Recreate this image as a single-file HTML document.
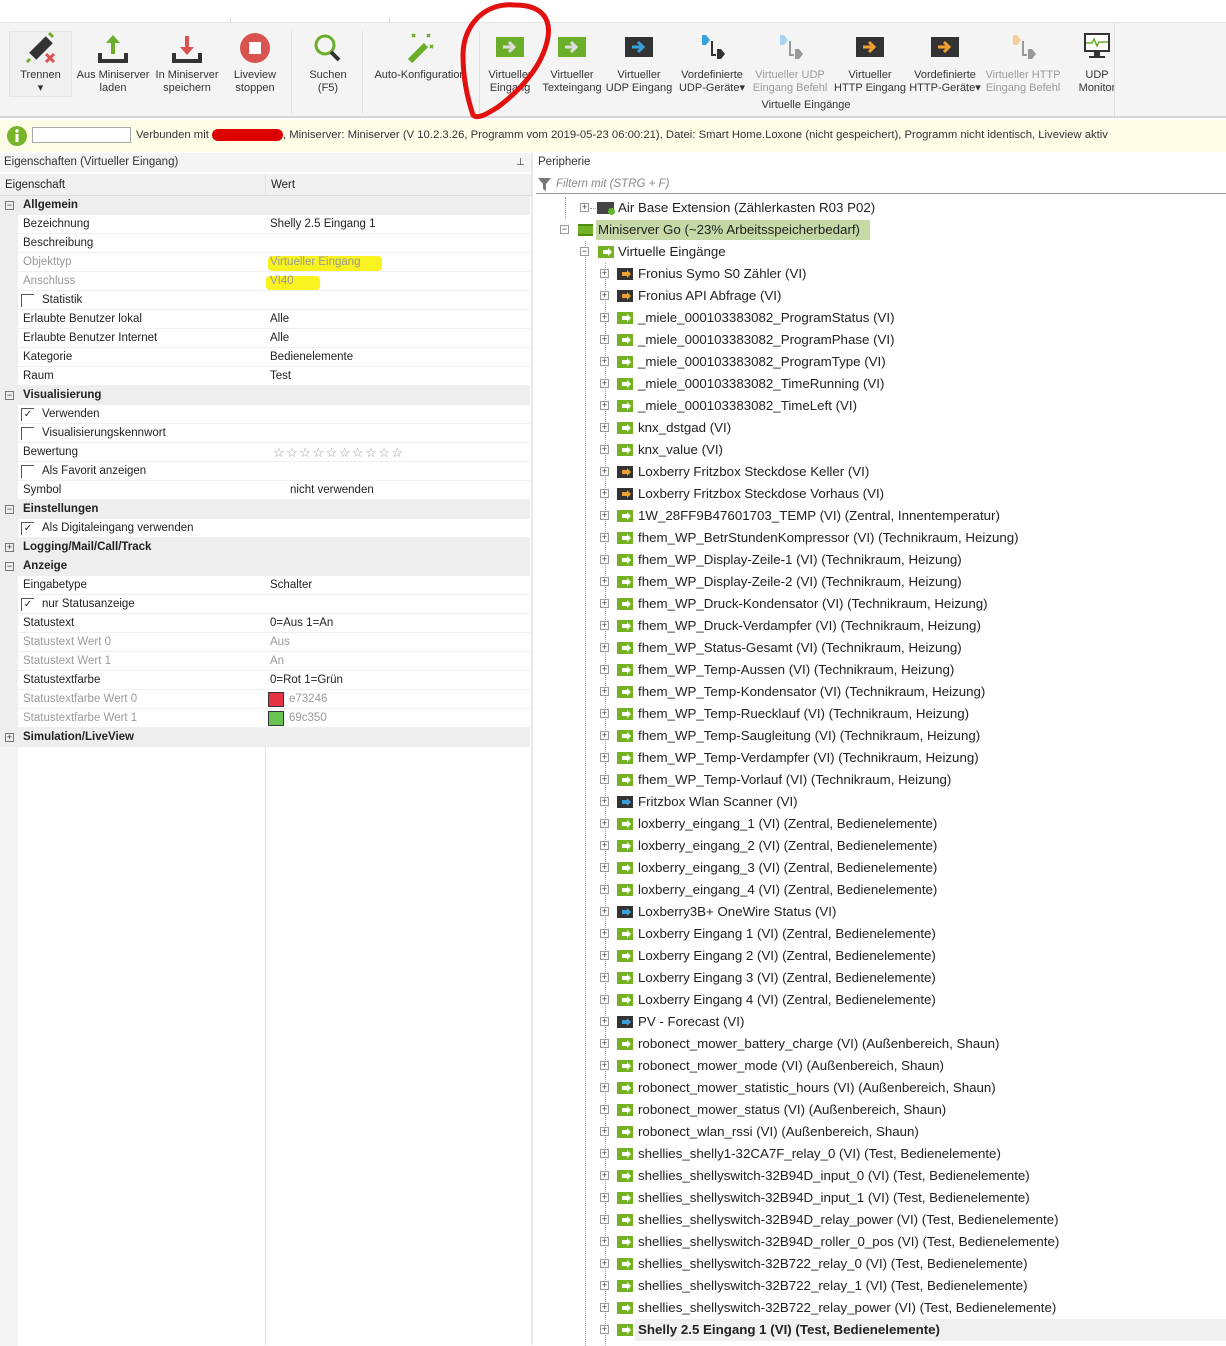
<!DOCTYPE html>
<html><head><meta charset="utf-8"><style>
*{margin:0;padding:0;box-sizing:border-box}
body{width:1226px;height:1345px;overflow:hidden;background:#fff;font-family:"Liberation Sans",sans-serif;color:#222;position:relative}
.abs{position:absolute}
#tb{position:absolute;left:0;top:22px;width:1226px;height:96px;background:#f4f4f4;border-top:1px solid #e2e2e2;border-bottom:2px solid #d6d6d6}
.btn{position:absolute;top:0;text-align:center;font-size:11px;line-height:13px;color:#333;white-space:nowrap}
.btn .ic{height:40px;position:relative}
.dis{color:#9a9a9a}
.sep{position:absolute;top:8px;width:1px;height:82px;background:#ddd}
#info{position:absolute;left:0;top:120px;width:1226px;height:32px;background:#fdfde8;font-size:11.3px;color:#333}
.row{position:absolute;left:0;width:530px;height:19px;font-size:11.5px;line-height:19px}
.cat{background:#eeeeee;font-weight:bold;color:#222}
.it{background:#fff;border-bottom:1px solid #f0f0f0}
.it .k{position:absolute;left:23px}
.it .v{position:absolute;left:270px}
.gut{position:absolute;left:0;top:0;width:18px;height:19px;background:#eeeeee}
.g{color:#9a9a9a}
.ex{position:absolute;left:5px;top:5px;width:9px;height:9px;border:1px solid #777;font-size:9px;line-height:7px;text-align:center;font-weight:normal;color:#333}
.cb{position:absolute;left:21px;top:3px;width:13px;height:13px;border-left:1px solid #555;border-top:1px solid #555;font-size:10px;line-height:12px;text-align:center}
.tr{position:absolute;height:22px;font-size:13.3px;line-height:22px;color:#222;white-space:nowrap}
.pm{position:absolute;top:6px;width:9px;height:9px;border:1px solid #999;background:#fff;font-size:9px;line-height:7px;text-align:center;color:#333}
.ico{position:absolute;top:5px;width:16px;height:12px;background:#74b224}
.ico:after{content:"";position:absolute;left:5px;top:4px;width:6px;height:4px;background:#fff}
.ico:before{content:"";position:absolute;left:10px;top:2px;border-left:4px solid #fff;border-top:4px solid transparent;border-bottom:4px solid transparent}
.o{background:#333}.o:after{background:#f0a030}.o:before{border-left-color:#f0a030}
.b{background:#333}.b:after{background:#3aa0e0}.b:before{border-left-color:#3aa0e0}
.dl{position:absolute;border-left:1px dotted #999}
.hl{position:absolute;border-top:1px dotted #999;width:8px}
.c{position:relative;height:22px;font-size:13.3px;line-height:22px;white-space:nowrap}
.c .pm{left:0}.c .ico{left:17px}.c .t{position:absolute;left:38px}
</style></head><body>

<div class="abs" style="left:0;top:0;width:1226px;height:22px;background:#fff"></div>
<div class="abs" style="left:230px;top:18px;width:160px;height:4px;border-left:1px solid #ddd;border-right:1px solid #ddd"></div>

<div id="tb">
 <div class="abs" style="left:9px;top:8px;width:63px;height:66px;border:1px solid #e4e4e4;background:#f0f0f0"></div>
 <div class="btn" style="left:12px;width:57px;top:6px"><div class="ic"><svg width="40" height="40" viewBox="0 0 40 40" style="margin-top:0"><rect x="10" y="18" width="12" height="10" transform="rotate(-45 16 23)" fill="#333"/><rect x="18" y="10" width="12" height="10" transform="rotate(-45 24 15)" fill="#333"/><path d="M28 4l4 4" stroke="#6aae2a" stroke-width="3"/><path d="M9 30l-3 3" stroke="#6aae2a" stroke-width="3"/><path d="M25 25l8 8M33 25l-8 8" stroke="#d9534f" stroke-width="3"/></svg></div><div>Trennen<br>▾</div></div>
 <div class="btn" style="left:74px;width:78px;top:6px"><div class="ic"><svg width="40" height="40" viewBox="0 0 40 40"><path d="M20 6l-7 8h5v11h4V14h5z" fill="#6aae2a"/><path d="M7 24v8h26v-8" stroke="#333" stroke-width="4" fill="none"/></svg></div>Aus Miniserver<br>laden</div>
 <div class="btn" style="left:152px;width:70px;top:6px"><div class="ic"><svg width="40" height="40" viewBox="0 0 40 40"><path d="M20 26l-7-8h5V7h4v11h5z" fill="#d9534f"/><path d="M7 24v8h26v-8" stroke="#333" stroke-width="4" fill="none"/></svg></div>In Miniserver<br>speichern</div>
 <div class="btn" style="left:225px;width:60px;top:6px"><div class="ic"><svg width="40" height="40" viewBox="0 0 40 40"><circle cx="20" cy="19" r="15" fill="#d9534f"/><rect x="14" y="13" width="12" height="12" fill="#fff"/></svg></div>Liveview<br>stoppen</div>
 <div class="sep" style="left:291px"></div>
 <div class="btn" style="left:300px;width:56px;top:6px"><div class="ic"><svg width="40" height="40" viewBox="0 0 40 40"><circle cx="17" cy="16" r="9" stroke="#6aae2a" stroke-width="3" fill="none"/><path d="M23 23l8 8" stroke="#333" stroke-width="4"/></svg></div>Suchen<br>(F5)</div>
 <div class="sep" style="left:362px"></div>
 <div class="btn" style="left:368px;width:104px;top:6px"><div class="ic"><svg width="40" height="40" viewBox="0 0 40 40"><path d="M10 32l16-16" stroke="#6aae2a" stroke-width="6"/><path d="M12 5l3 3M15 5l-3 3M27 5l3 3M30 5l-3 3M30 16l3 3M33 16l-3 3" stroke="#6aae2a" stroke-width="1.6"/></svg></div>Auto-Konfiguration</div>
 <div class="sep" style="left:479px"></div>
 <div class="btn" style="left:482px;width:56px;top:6px"><div class="ic"><svg width="40" height="40" viewBox="0 0 40 40"><rect x="6" y="8" width="28" height="20" fill="#6aae2a"/><path d="M13 18h9M19 13l5 5-5 5" stroke="#ddd" stroke-width="3" fill="none"/></svg></div>Virtueller<br>Eingang</div>
 <div class="btn" style="left:540px;width:64px;top:6px"><div class="ic"><svg width="40" height="40" viewBox="0 0 40 40"><rect x="6" y="8" width="28" height="20" fill="#6aae2a"/><path d="M13 18h9M19 13l5 5-5 5" stroke="#ddd" stroke-width="3" fill="none"/></svg></div>Virtueller<br>Texteingang</div>
 <div class="btn" style="left:604px;width:70px;top:6px"><div class="ic"><svg width="40" height="40" viewBox="0 0 40 40"><rect x="6" y="8" width="28" height="20" fill="#333"/><path d="M13 18h9M19 13l5 5-5 5" stroke="#3aa0e0" stroke-width="3" fill="none"/></svg></div>Virtueller<br>UDP Eingang</div>
 <div class="btn" style="left:676px;width:72px;top:6px"><div class="ic"><svg width="40" height="40" viewBox="0 0 40 40"><path d="M10 6h4l4 5-4 5h-4z" fill="#3aa0e0"/><path d="M20 12v14h4" stroke="#333" stroke-width="2" fill="none"/><path d="M25 20h4l4 5-4 5h-4z" fill="#333"/></svg></div>Vordefinierte<br>UDP-Geräte▾</div>
 <div class="btn dis" style="left:750px;width:80px;top:6px"><div class="ic"><svg width="40" height="40" viewBox="0 0 40 40"><path d="M10 6h4l4 5-4 5h-4z" fill="#a8d4f0"/><path d="M20 12v14h4" stroke="#999" stroke-width="2" fill="none"/><path d="M25 20h4l4 5-4 5h-4z" fill="#999"/></svg></div>Virtueller UDP<br>Eingang Befehl</div>
 <div class="btn" style="left:832px;width:76px;top:6px"><div class="ic"><svg width="40" height="40" viewBox="0 0 40 40"><rect x="6" y="8" width="28" height="20" fill="#333"/><path d="M13 18h9M19 13l5 5-5 5" stroke="#f0a030" stroke-width="3" fill="none"/></svg></div>Virtueller<br>HTTP Eingang</div>
 <div class="btn" style="left:908px;width:74px;top:6px"><div class="ic"><svg width="40" height="40" viewBox="0 0 40 40"><rect x="6" y="8" width="28" height="20" fill="#333"/><path d="M13 18h9M19 13l5 5-5 5" stroke="#f0a030" stroke-width="3" fill="none"/></svg></div>Vordefinierte<br>HTTP-Geräte▾</div>
 <div class="btn dis" style="left:983px;width:80px;top:6px"><div class="ic"><svg width="40" height="40" viewBox="0 0 40 40"><path d="M10 6h4l4 5-4 5h-4z" fill="#f5cc99"/><path d="M20 12v14h4" stroke="#999" stroke-width="2" fill="none"/><path d="M25 20h4l4 5-4 5h-4z" fill="#999"/></svg></div>Virtueller HTTP<br>Eingang Befehl</div>
 <div class="btn" style="left:1070px;width:54px;top:6px"><div class="ic"><svg width="40" height="40" viewBox="0 0 40 40"><rect x="7" y="4" width="26" height="19" fill="#333"/><rect x="9" y="6" width="22" height="15" fill="#fff"/><path d="M9 14h6l2-4 3 7 2-4h9" stroke="#6aae2a" stroke-width="1.5" fill="none"/><rect x="17" y="23" width="6" height="4" fill="#333"/><rect x="12" y="27" width="16" height="2" fill="#333"/></svg></div>UDP<br>Monitor</div>
 <div class="btn" style="left:746px;width:120px;top:76px">Virtuelle Eingänge</div>
 <div class="sep" style="left:1114px;top:0;height:96px"></div>
</div>

<svg class="abs" style="left:455px;top:0" width="110" height="122"><path d="M60 5C30 2 8 25 8 55c0 25 5 45 10 60 5 5 15 -2 25-8 20-15 45-40 50-70 3-20-8-32-33-32z" stroke="#e31010" stroke-width="5" fill="none"/></svg>

<div id="info">
 <svg class="abs" style="left:7px;top:6px" width="20" height="20"><circle cx="10" cy="10" r="10" fill="#78b42a"/><rect x="8.5" y="8" width="3" height="8" fill="#fff"/><circle cx="10" cy="5" r="1.7" fill="#fff"/></svg>
 <div class="abs" style="left:32px;top:7px;width:99px;height:16px;border:1px solid #aaa;background:#fff"></div>
 <div class="abs" style="left:136px;top:9px;white-space:nowrap">Verbunden mit <span style="color:#d00;background:#d00;border-radius:6px">&nbsp;xxxxxxxxxxxx</span>, Miniserver: Miniserver (V 10.2.3.26, Programm vom 2019-05-23 06:00:21), Datei: Smart Home.Loxone (nicht gespeichert), Programm nicht identisch, Liveview aktiv</div>
</div>

<div class="abs" style="left:0;top:153px;width:532px;height:19px;background:#f4f4f4;font-size:11.5px;line-height:19px;padding-left:4px;color:#333">Eigenschaften (Virtueller Eingang)<span class="abs" style="left:516px;font-size:10px">⊥</span></div>
<div class="abs" style="left:0;top:174px;width:532px;height:22px;background:#f0f0f0;font-size:11.5px;line-height:22px;border-bottom:1px solid #ddd"><span class="abs" style="left:5px">Eigenschaft</span><span class="abs" style="left:271px">Wert</span></div>
<div class="abs" style="left:0;top:196px;width:18px;height:1150px;background:#f4f4f4"></div>
<div class="abs" style="left:265px;top:174px;width:1px;height:1171px;background:#e4e4e4"></div>
<div class="abs" style="left:531px;top:153px;width:2px;height:1192px;background:#e8e8e8"></div>

<div class="abs" style="left:0;top:1px;width:532px;height:1345px">
<div class="row cat" style="top:195px"><span class="ex">−</span><span class="abs" style="left:23px">Allgemein</span></div>
<div class="row it" style="top:214px"><div class="gut"></div><span class="k">Bezeichnung</span><span class="v">Shelly 2.5 Eingang 1</span></div>
<div class="row it" style="top:233px"><div class="gut"></div><span class="k">Beschreibung</span></div>
<div class="row it" style="top:252px"><div class="gut"></div><span class="k g">Objekttyp</span><span class="abs" style="left:268px;width:114px;height:15px;background:#f8f21e;border-radius:4px;top:3px"></span><span class="v" style="color:#999">Virtueller Eingang</span></div>
<div class="row it" style="top:271px"><div class="gut"></div><span class="k g">Anschluss</span><span class="abs" style="left:266px;width:54px;height:14px;background:#f8f21e;border-radius:4px;top:4px"></span><span class="v" style="color:#999">VI40</span></div>
<div class="row it" style="top:290px"><div class="gut"></div><span class="cb"></span><span class="abs" style="left:42px">Statistik</span></div>
<div class="row it" style="top:309px"><div class="gut"></div><span class="k">Erlaubte Benutzer lokal</span><span class="v">Alle</span></div>
<div class="row it" style="top:328px"><div class="gut"></div><span class="k">Erlaubte Benutzer Internet</span><span class="v">Alle</span></div>
<div class="row it" style="top:347px"><div class="gut"></div><span class="k">Kategorie</span><span class="v">Bedienelemente</span></div>
<div class="row it" style="top:366px"><div class="gut"></div><span class="k">Raum</span><span class="v">Test</span></div>
<div class="row cat" style="top:385px"><span class="ex">−</span><span class="abs" style="left:23px">Visualisierung</span></div>
<div class="row it" style="top:404px"><div class="gut"></div><span class="cb">✓</span><span class="abs" style="left:42px">Verwenden</span></div>
<div class="row it" style="top:423px"><div class="gut"></div><span class="cb"></span><span class="abs" style="left:42px">Visualisierungskennwort</span></div>
<div class="row it" style="top:442px"><div class="gut"></div><span class="k">Bewertung</span><span class="abs" style="left:273px;color:#999;font-size:13px;letter-spacing:1.5px">☆☆☆☆☆☆☆☆☆☆</span></div>
<div class="row it" style="top:461px"><div class="gut"></div><span class="cb"></span><span class="abs" style="left:42px">Als Favorit anzeigen</span></div>
<div class="row it" style="top:480px"><div class="gut"></div><span class="k">Symbol</span><span class="abs" style="left:290px">nicht verwenden</span></div>
<div class="row cat" style="top:499px"><span class="ex">−</span><span class="abs" style="left:23px">Einstellungen</span></div>
<div class="row it" style="top:518px"><div class="gut"></div><span class="cb">✓</span><span class="abs" style="left:42px">Als Digitaleingang verwenden</span></div>
<div class="row cat" style="top:537px"><span class="ex">+</span><span class="abs" style="left:23px">Logging/Mail/Call/Track</span></div>
<div class="row cat" style="top:556px"><span class="ex">−</span><span class="abs" style="left:23px">Anzeige</span></div>
<div class="row it" style="top:575px"><div class="gut"></div><span class="k">Eingabetype</span><span class="v">Schalter</span></div>
<div class="row it" style="top:594px"><div class="gut"></div><span class="cb">✓</span><span class="abs" style="left:42px">nur Statusanzeige</span></div>
<div class="row it" style="top:613px"><div class="gut"></div><span class="k">Statustext</span><span class="v">0=Aus 1=An</span></div>
<div class="row it" style="top:632px"><div class="gut"></div><span class="k g">Statustext Wert 0</span><span class="v g">Aus</span></div>
<div class="row it" style="top:651px"><div class="gut"></div><span class="k g">Statustext Wert 1</span><span class="v g">An</span></div>
<div class="row it" style="top:670px"><div class="gut"></div><span class="k">Statustextfarbe</span><span class="v">0=Rot 1=Grün</span></div>
<div class="row it" style="top:689px"><div class="gut"></div><span class="k g">Statustextfarbe Wert 0</span><span class="abs" style="left:268px;top:2px;width:16px;height:15px;background:#e73246;border:1px solid #333"></span><span class="abs g" style="left:289px">e73246</span></div>
<div class="row it" style="top:708px"><div class="gut"></div><span class="k g">Statustextfarbe Wert 1</span><span class="abs" style="left:268px;top:2px;width:16px;height:15px;background:#69c350;border:1px solid #333"></span><span class="abs g" style="left:289px">69c350</span></div>
<div class="row cat" style="top:727px"><span class="ex">+</span><span class="abs" style="left:23px">Simulation/LiveView</span></div>
</div>

<div class="abs" style="left:536px;top:153px;width:690px;height:19px;font-size:11.5px;line-height:19px;padding-left:2px;color:#333">Peripherie</div>
<div class="abs" style="left:536px;top:174px;width:690px;height:20px;border-bottom:1px solid #999;font-size:11.5px;line-height:20px;color:#888;font-style:italic"><svg class="abs" style="left:2px;top:4px" width="14" height="13"><path d="M0 0h13l-5 6v7l-3-2V6z" fill="#777"/></svg><span class="abs" style="left:20px">Filtern mit (STRG + F)</span></div>

<div class="dl" style="left:565px;top:197px;height:22px"></div>
<div class="dl" style="left:585px;top:241px;height:1105px"></div>
<div class="dl" style="left:605px;top:263px;height:1083px"></div>

<div class="tr" style="top:197px;left:580px"><span class="pm" style="left:0">+</span><span class="hl" style="left:10px;top:11px;width:6px"></span><span class="abs" style="left:17px;top:5px;width:17px;height:12px;background:#444"></span><span class="abs" style="left:28px;top:11px;width:7px;height:7px;border-radius:50%;background:#5cb82a"></span><span class="abs" style="left:38px">Air Base Extension (Zählerkasten R03 P02)</span></div>
<div class="tr" style="top:219px;left:560px"><span class="pm" style="left:0">−</span><span class="abs" style="left:18px;top:5px;width:15px;height:12px;background:#74b224;border-top:2px solid #4d8c10;border-bottom:2px solid #4d8c10"></span><span class="abs" style="left:36px;top:1px;width:274px;height:20px;background:#c5d9a6"></span><span class="abs" style="left:38px">Miniserver Go (~23% Arbeitsspeicherbedarf)</span></div>
<div class="tr" style="top:241px;left:580px"><span class="pm" style="left:0">−</span><span class="ico" style="left:18px"></span><span class="abs" style="left:38px">Virtuelle Eingänge</span></div>

<div class="abs" style="left:600px;top:263px;width:626px">
<div class="c"><span class="pm">+</span><span class="ico o"></span><span class="t">Fronius Symo S0 Zähler (VI)</span></div>
<div class="c"><span class="pm">+</span><span class="ico o"></span><span class="t">Fronius API Abfrage (VI)</span></div>
<div class="c"><span class="pm">+</span><span class="ico"></span><span class="t">_miele_000103383082_ProgramStatus (VI)</span></div>
<div class="c"><span class="pm">+</span><span class="ico"></span><span class="t">_miele_000103383082_ProgramPhase (VI)</span></div>
<div class="c"><span class="pm">+</span><span class="ico"></span><span class="t">_miele_000103383082_ProgramType (VI)</span></div>
<div class="c"><span class="pm">+</span><span class="ico"></span><span class="t">_miele_000103383082_TimeRunning (VI)</span></div>
<div class="c"><span class="pm">+</span><span class="ico"></span><span class="t">_miele_000103383082_TimeLeft (VI)</span></div>
<div class="c"><span class="pm">+</span><span class="ico"></span><span class="t">knx_dstgad (VI)</span></div>
<div class="c"><span class="pm">+</span><span class="ico"></span><span class="t">knx_value (VI)</span></div>
<div class="c"><span class="pm">+</span><span class="ico o"></span><span class="t">Loxberry Fritzbox Steckdose Keller (VI)</span></div>
<div class="c"><span class="pm">+</span><span class="ico o"></span><span class="t">Loxberry Fritzbox Steckdose Vorhaus (VI)</span></div>
<div class="c"><span class="pm">+</span><span class="ico"></span><span class="t">1W_28FF9B47601703_TEMP (VI) (Zentral, Innentemperatur)</span></div>
<div class="c"><span class="pm">+</span><span class="ico"></span><span class="t">fhem_WP_BetrStundenKompressor (VI) (Technikraum, Heizung)</span></div>
<div class="c"><span class="pm">+</span><span class="ico"></span><span class="t">fhem_WP_Display-Zeile-1 (VI) (Technikraum, Heizung)</span></div>
<div class="c"><span class="pm">+</span><span class="ico"></span><span class="t">fhem_WP_Display-Zeile-2 (VI) (Technikraum, Heizung)</span></div>
<div class="c"><span class="pm">+</span><span class="ico"></span><span class="t">fhem_WP_Druck-Kondensator (VI) (Technikraum, Heizung)</span></div>
<div class="c"><span class="pm">+</span><span class="ico"></span><span class="t">fhem_WP_Druck-Verdampfer (VI) (Technikraum, Heizung)</span></div>
<div class="c"><span class="pm">+</span><span class="ico"></span><span class="t">fhem_WP_Status-Gesamt (VI) (Technikraum, Heizung)</span></div>
<div class="c"><span class="pm">+</span><span class="ico"></span><span class="t">fhem_WP_Temp-Aussen (VI) (Technikraum, Heizung)</span></div>
<div class="c"><span class="pm">+</span><span class="ico"></span><span class="t">fhem_WP_Temp-Kondensator (VI) (Technikraum, Heizung)</span></div>
<div class="c"><span class="pm">+</span><span class="ico"></span><span class="t">fhem_WP_Temp-Ruecklauf (VI) (Technikraum, Heizung)</span></div>
<div class="c"><span class="pm">+</span><span class="ico"></span><span class="t">fhem_WP_Temp-Saugleitung (VI) (Technikraum, Heizung)</span></div>
<div class="c"><span class="pm">+</span><span class="ico"></span><span class="t">fhem_WP_Temp-Verdampfer (VI) (Technikraum, Heizung)</span></div>
<div class="c"><span class="pm">+</span><span class="ico"></span><span class="t">fhem_WP_Temp-Vorlauf (VI) (Technikraum, Heizung)</span></div>
<div class="c"><span class="pm">+</span><span class="ico b"></span><span class="t">Fritzbox Wlan Scanner (VI)</span></div>
<div class="c"><span class="pm">+</span><span class="ico"></span><span class="t">loxberry_eingang_1 (VI) (Zentral, Bedienelemente)</span></div>
<div class="c"><span class="pm">+</span><span class="ico"></span><span class="t">loxberry_eingang_2 (VI) (Zentral, Bedienelemente)</span></div>
<div class="c"><span class="pm">+</span><span class="ico"></span><span class="t">loxberry_eingang_3 (VI) (Zentral, Bedienelemente)</span></div>
<div class="c"><span class="pm">+</span><span class="ico"></span><span class="t">loxberry_eingang_4 (VI) (Zentral, Bedienelemente)</span></div>
<div class="c"><span class="pm">+</span><span class="ico b"></span><span class="t">Loxberry3B+ OneWire Status (VI)</span></div>
<div class="c"><span class="pm">+</span><span class="ico"></span><span class="t">Loxberry Eingang 1 (VI) (Zentral, Bedienelemente)</span></div>
<div class="c"><span class="pm">+</span><span class="ico"></span><span class="t">Loxberry Eingang 2 (VI) (Zentral, Bedienelemente)</span></div>
<div class="c"><span class="pm">+</span><span class="ico"></span><span class="t">Loxberry Eingang 3 (VI) (Zentral, Bedienelemente)</span></div>
<div class="c"><span class="pm">+</span><span class="ico"></span><span class="t">Loxberry Eingang 4 (VI) (Zentral, Bedienelemente)</span></div>
<div class="c"><span class="pm">+</span><span class="ico b"></span><span class="t">PV - Forecast (VI)</span></div>
<div class="c"><span class="pm">+</span><span class="ico"></span><span class="t">robonect_mower_battery_charge (VI) (Außenbereich, Shaun)</span></div>
<div class="c"><span class="pm">+</span><span class="ico"></span><span class="t">robonect_mower_mode (VI) (Außenbereich, Shaun)</span></div>
<div class="c"><span class="pm">+</span><span class="ico"></span><span class="t">robonect_mower_statistic_hours (VI) (Außenbereich, Shaun)</span></div>
<div class="c"><span class="pm">+</span><span class="ico"></span><span class="t">robonect_mower_status (VI) (Außenbereich, Shaun)</span></div>
<div class="c"><span class="pm">+</span><span class="ico"></span><span class="t">robonect_wlan_rssi (VI) (Außenbereich, Shaun)</span></div>
<div class="c"><span class="pm">+</span><span class="ico"></span><span class="t">shellies_shelly1-32CA7F_relay_0 (VI) (Test, Bedienelemente)</span></div>
<div class="c"><span class="pm">+</span><span class="ico"></span><span class="t">shellies_shellyswitch-32B94D_input_0 (VI) (Test, Bedienelemente)</span></div>
<div class="c"><span class="pm">+</span><span class="ico"></span><span class="t">shellies_shellyswitch-32B94D_input_1 (VI) (Test, Bedienelemente)</span></div>
<div class="c"><span class="pm">+</span><span class="ico"></span><span class="t">shellies_shellyswitch-32B94D_relay_power (VI) (Test, Bedienelemente)</span></div>
<div class="c"><span class="pm">+</span><span class="ico"></span><span class="t">shellies_shellyswitch-32B94D_roller_0_pos (VI) (Test, Bedienelemente)</span></div>
<div class="c"><span class="pm">+</span><span class="ico"></span><span class="t">shellies_shellyswitch-32B722_relay_0 (VI) (Test, Bedienelemente)</span></div>
<div class="c"><span class="pm">+</span><span class="ico"></span><span class="t">shellies_shellyswitch-32B722_relay_1 (VI) (Test, Bedienelemente)</span></div>
<div class="c"><span class="pm">+</span><span class="ico"></span><span class="t">shellies_shellyswitch-32B722_relay_power (VI) (Test, Bedienelemente)</span></div>
<div class="c"><span class="pm">+</span><span class="ico"></span><span class="abs" style="left:35px;top:0;width:591px;height:22px;background:#f0f0f0"></span><span class="t" style="font-weight:bold">Shelly 2.5 Eingang 1 (VI) (Test, Bedienelemente)</span></div>
</div>
</body></html>
